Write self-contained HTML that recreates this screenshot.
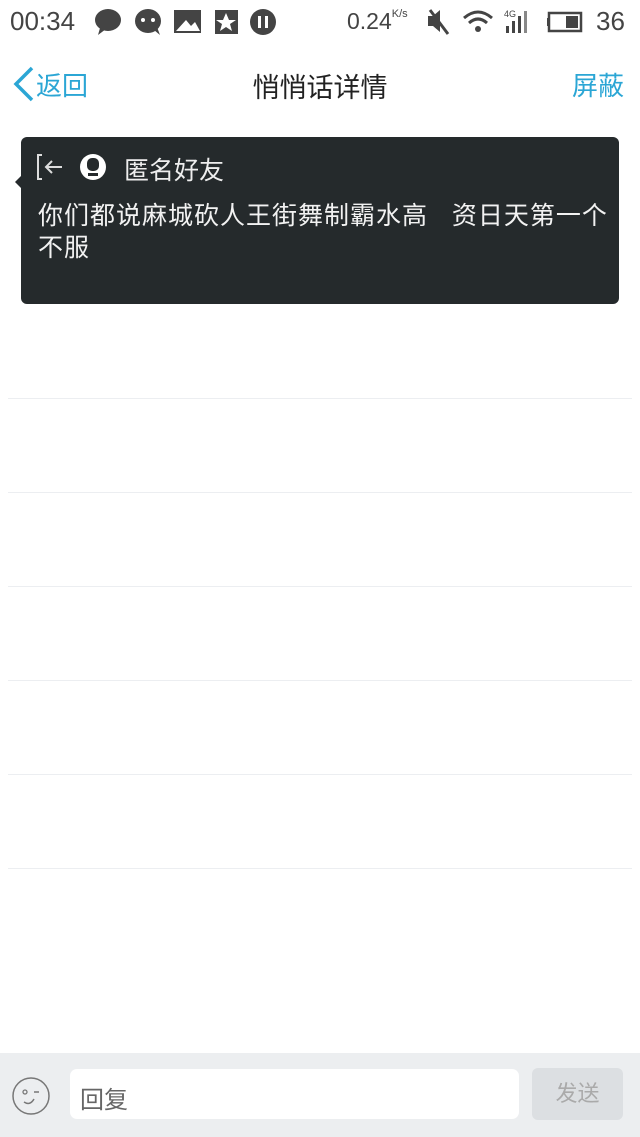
<!DOCTYPE html>
<html><head><meta charset="utf-8"><style>
*{margin:0;padding:0;box-sizing:border-box}
body{width:640px;height:1137px;background:#fff;position:relative;overflow:hidden;font-family:"Liberation Sans","Noto Sans CJK SC",sans-serif}
.a{position:absolute}
.ln{position:absolute;left:8px;width:624px;height:1px;background:#eceef1}
</style></head><body>
<div class="a" style="left:10px;top:6px;font-size:26px;color:#444">00:34</div>
<svg class="a" style="left:94px;top:8px" width="190" height="28">
<ellipse cx="14" cy="12" rx="13" ry="11" fill="#444"/><path d="M6 20 L4 27 L12 21Z" fill="#444"/>
<ellipse cx="54" cy="13" rx="13" ry="12" fill="#444"/><circle cx="49" cy="12" r="2" fill="#fff"/><circle cx="59" cy="12" r="2" fill="#fff"/><path d="M60 22 L66 27 L63 19Z" fill="#444"/>
<rect x="80" y="2" width="27" height="23" fill="#444"/><path d="M82 23 L92 12 L97 18 L101 14 L106 23Z" fill="#fff"/>
<rect x="121" y="2" width="23" height="24" fill="#444"/><path d="M132 5 L135 12 L142 12 L136 16 L138 23 L132 19 L126 23 L128 16 L122 12 L129 12Z" fill="#fff"/>
<circle cx="169" cy="14" r="13" fill="#444"/><rect x="164" y="8" width="3" height="12" fill="#fff"/><rect x="171" y="8" width="3" height="12" fill="#fff"/>
</svg>
<div class="a" style="left:347px;top:8px;font-size:23px;color:#444">0.24<span style="font-size:11px;vertical-align:top">K/s</span></div>
<svg class="a" style="left:426px;top:8px" width="180" height="28">
<path d="M2 8 H7 L14 2 V24 L7 18 H2Z" fill="#444"/><path d="M4 2 L22 26" stroke="#444" stroke-width="3"/>
<path d="M38 10 Q52 -2 66 10" stroke="#444" stroke-width="3" fill="none"/><path d="M43 15 Q52 7 61 15" stroke="#444" stroke-width="3" fill="none"/><circle cx="52" cy="21" r="3" fill="#444"/>
<text x="78" y="9" font-size="9" fill="#444" font-family="Liberation Sans">4G</text>
<rect x="80" y="18" width="3" height="7" fill="#444"/><rect x="86" y="13" width="3" height="12" fill="#444"/><rect x="92" y="8" width="3" height="17" fill="#444"/><rect x="98" y="3" width="3" height="22" fill="#888"/>
<rect x="123" y="5" width="32" height="18" fill="none" stroke="#444" stroke-width="2.5"/><rect x="121" y="10" width="3" height="8" fill="#444"/><rect x="140" y="8" width="12" height="12" fill="#444"/>
</svg>
<div class="a" style="left:596px;top:6px;font-size:26px;color:#444">36</div>
<svg class="a" style="left:12px;top:66px" width="24" height="36"><path d="M20 2 L4 18 L20 34" stroke="#2ba6d5" stroke-width="3.5" fill="none"/></svg>
<div class="a" style="left:36px;top:66px;font-size:26px;color:#2ba6d5">返回</div>
<div class="a" style="left:0;width:640px;text-align:center;top:66px;font-size:27px;color:#222">悄悄话详情</div>
<div class="a" style="left:572px;top:66px;font-size:26px;color:#2ba6d5">屏蔽</div>
<div class="a" style="left:21px;top:137px;width:598px;height:167px;background:#252a2c;border-radius:6px"></div>
<div class="a" style="left:15px;top:175px;width:0;height:0;border-top:7px solid transparent;border-bottom:7px solid transparent;border-right:7px solid #252a2c"></div>
<svg class="a" style="left:36px;top:152px" width="76" height="30">
<path d="M6 3 H2 V27 H6" stroke="#ddd" stroke-width="2" fill="none"/><path d="M26 15 H10 M16 9 L10 15 L16 21" stroke="#ddd" stroke-width="2" fill="none"/>
<circle cx="57" cy="15" r="13" fill="#fff"/><rect x="51" y="6" width="12" height="13" rx="5" fill="#252a2c"/><rect x="52" y="21" width="10" height="3" fill="#252a2c"/>
</svg>
<div class="a" style="left:124px;top:151px;font-size:25px;color:#eee">匿名好友</div>
<div class="a" style="left:38px;top:200px;width:580px;font-size:25px;letter-spacing:1px;line-height:32px;color:#f2f2f2">你们都说麻城砍人王街舞制霸水高&nbsp;&nbsp;&nbsp;资日天第一个<br>不服</div>
<div class="ln" style="top:398px"></div><div class="ln" style="top:492px"></div><div class="ln" style="top:586px"></div><div class="ln" style="top:680px"></div><div class="ln" style="top:774px"></div><div class="ln" style="top:868px"></div>
<div class="a" style="left:0;top:1053px;width:640px;height:84px;background:#eceef0"></div>
<svg class="a" style="left:10px;top:1075px" width="42" height="42"><circle cx="21" cy="21" r="18" fill="none" stroke="#777" stroke-width="1.5"/><circle cx="15" cy="17" r="2" fill="none" stroke="#777" stroke-width="1.3"/><path d="M24 17 H29" stroke="#777" stroke-width="1.5"/><path d="M14 27 Q20 31 24 24" stroke="#777" stroke-width="1.5" fill="none"/></svg>
<div class="a" style="left:70px;top:1069px;width:449px;height:50px;background:#fff;border-radius:7px"></div>
<div class="a" style="left:80px;top:1080px;font-size:24px;color:#666">回复</div>
<div class="a" style="left:532px;top:1068px;width:91px;height:52px;background:#dcdfe2;border-radius:6px;text-align:center;line-height:52px;font-size:22px;color:#aaa">发送</div>
</body></html>
